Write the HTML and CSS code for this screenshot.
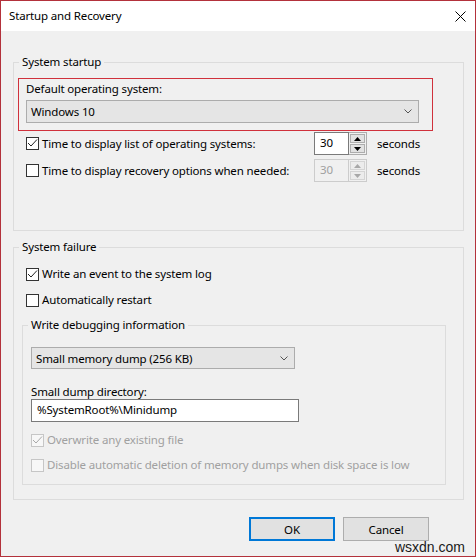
FILE: index.html
```html
<!DOCTYPE html>
<html lang="en">
<head>
<meta charset="utf-8">
<title>Startup and Recovery</title>
<link rel="stylesheet" href="styles.css">
</head>
<body>
<div class="window">
  <div class="titlebar">
    <span class="title">Startup and Recovery</span>
    <svg class="close" width="11" height="11" viewBox="0 0 11 11"><path d="M0.5 0.5 L10.5 10.5 M10.5 0.5 L0.5 10.5" stroke="#000" stroke-width="1" fill="none"/></svg>
  </div>
  <div class="content">
    <fieldset class="group g1">
      <legend>System startup</legend>
      <div class="highlight">
        <div class="label">Default operating system:</div>
        <div class="select sel1"><span>Windows 10</span><svg class="chev" width="8" height="5" viewBox="0 0 8 5"><polyline points="0.5,0.5 4,4 7.5,0.5" stroke="#555" fill="none"/></svg></div>
      </div>
      <div class="timed first">
        <div class="cb"><span class="box"><svg width="11" height="11" viewBox="0 0 11 11"><polyline points="1,5 4,8 10,1.5" stroke="#222" fill="none"/></svg></span><span>Time to display list of operating systems:</span></div>
        <div class="spin">
          <div class="spin-text">30</div>
          <div class="spin-btns">
            <span class="sb"><svg width="7" height="4" viewBox="0 0 7 4"><path d="M0 4 L3.5 0 L7 4 Z" fill="#000"/></svg></span>
            <span class="sb"><svg width="7" height="4" viewBox="0 0 7 4"><path d="M0 0 L3.5 4 L7 0 Z" fill="#000"/></svg></span>
          </div>
        </div>
        <span class="unit">seconds</span>
      </div>
      <div class="timed second">
        <div class="cb"><span class="box"></span><span>Time to display recovery options when needed:</span></div>
        <div class="spin disabled">
          <div class="spin-text">30</div>
          <div class="spin-btns">
            <span class="sb"><svg width="7" height="4" viewBox="0 0 7 4"><path d="M0 4 L3.5 0 L7 4 Z" fill="#a8a8a8"/></svg></span>
            <span class="sb"><svg width="7" height="4" viewBox="0 0 7 4"><path d="M0 0 L3.5 4 L7 0 Z" fill="#a8a8a8"/></svg></span>
          </div>
        </div>
        <span class="unit">seconds</span>
      </div>
    </fieldset>

    <fieldset class="group g2">
      <legend>System failure</legend>
      <div class="cb row r1"><span class="box"><svg width="11" height="11" viewBox="0 0 11 11"><polyline points="1,5 4,8 10,1.5" stroke="#222" fill="none"/></svg></span><span>Write an event to the system log</span></div>
      <div class="cb row r2"><span class="box"></span><span>Automatically restart</span></div>

      <fieldset class="group inner">
        <legend>Write debugging information</legend>
        <div class="select sel2"><span>Small memory dump (256 KB)</span><svg class="chev" width="8" height="5" viewBox="0 0 8 5"><polyline points="0.5,0.5 4,4 7.5,0.5" stroke="#555" fill="none"/></svg></div>
        <div class="label dir-label">Small dump directory:</div>
        <div class="textbox">%SystemRoot%\Minidump</div>
        <div class="cb row dis d1"><span class="box"><svg width="11" height="11" viewBox="0 0 11 11"><polyline points="1,5 4,8 10,1.5" stroke="#a8a8a8" fill="none"/></svg></span><span>Overwrite any existing file</span></div>
        <div class="cb row dis d2"><span class="box"></span><span>Disable automatic deletion of memory dumps when disk space is low</span></div>
      </fieldset>
    </fieldset>

    <div class="buttons">
      <div class="btn default">OK</div>
      <div class="btn">Cancel</div>
    </div>
  </div>
  <div class="watermark">wsxdn.com</div>
</div>
</body>
</html>
```

FILE: styles.css
```css
* { box-sizing: border-box; }
html, body { margin: 0; padding: 0; }
body {
  font-family: "Noto Sans", sans-serif;
  font-size: 11.5px;
  letter-spacing: -0.15px;
  color: #000;
  background: #f0f0f0;
}
.window {
  position: relative;
  width: 476px;
  height: 557px;
  border: 1px solid #b3313b;
  background: #f0f0f0;
  overflow: hidden;
}
.titlebar {
  height: 30px;
  background: #fff;
  display: flex;
  align-items: center;
  justify-content: space-between;
  padding: 0 9px 0 8px;
}
.title { line-height: 16px; }
.close { display: block; }

.content { padding: 23px 11px 0 12px; }

fieldset.group {
  margin: 0;
  padding: 0;
  border: 1px solid #dcdcdc;
  min-width: 0;
}
fieldset.group > legend {
  margin-left: 5px;
  padding: 0 3px;
  line-height: 16px;
}

fieldset.g1 { padding-bottom: 48px; }
.highlight {
  margin: 8px 0 0 4px;
  width: 415px;
  border: 1px solid #d0313c;
  padding: 2px 0 7px 7px;
}
.label { line-height: 16px; }

.select {
  display: flex;
  align-items: center;
  justify-content: space-between;
  background: #e5e5e5;
  border: 1px solid #acacac;
  padding: 0 6px 0 4px;
}
.sel1 { margin-top: 3px; width: 393px; height: 23px; }
.chev { display: block; }

.timed {
  display: grid;
  grid-template-columns: 288px 53px auto;
  align-items: center;
  height: 23px;
  margin-left: 12px;
}
.timed.first { margin-top: 1px; }
.timed.second { margin-top: 4px; }
.unit { padding-left: 10px; line-height: 16px; }

.cb {
  display: flex;
  align-items: center;
  line-height: 16px;
}
.box {
  flex: none;
  width: 13px;
  height: 13px;
  border: 1px solid #333;
  background: #fff;
  margin-right: 3px;
}
.box svg { display: block; }

.spin {
  display: flex;
  height: 23px;
}
.spin-text {
  width: 35px;
  height: 23px;
  border: 1px solid #7a7a7a;
  background: #fff;
  padding-left: 5px;
  line-height: 20px;
}
.spin-btns {
  width: 18px;
  display: flex;
  flex-direction: column;
  border: 1px solid #adadad;
  border-left: none;
  background: #f0f0f0;
  padding: 1px;
  gap: 1px;
}
.sb {
  flex: 1;
  display: flex;
  align-items: center;
  justify-content: center;
  background: #e1e1e1;
  border: 1px solid #adadad;
}
.sb svg { display: block; }
.spin.disabled .spin-text {
  border-color: #cccccc;
  background: #f0f0f0;
  color: #a0a0a0;
}
.spin.disabled .spin-btns { border-color: #cccccc; }
.spin.disabled .sb { border-color: #d4d4d4; background: #ececec; }

fieldset.g2 { margin-top: 8px; padding-bottom: 14px; }
.row { height: 16px; margin-left: 12px; }
.r1 { margin-top: 11px; }
.r2 { margin-top: 10px; }

fieldset.inner { margin: 9px 17px 0 8px; padding-bottom: 11px; }
.sel2 { margin: 14px 0 0 8px; width: 264px; height: 22px; }
.dir-label { margin: 16px 0 0 8px; line-height: 14px; }
.textbox {
  margin-left: 8px;
  width: 268px;
  height: 23px;
  border: 1px solid #7a7a7a;
  background: #fff;
  padding-left: 5px;
  line-height: 20px;
}
.row.dis { margin-left: 8px; color: #a0a0a0; }
.row.dis .box { border-color: #c6c6c6; background: #f7f7f7; }
.d1 { margin-top: 10px; }
.d2 { margin-top: 9px; }

.buttons {
  display: flex;
  justify-content: flex-end;
  gap: 8px;
  margin: 17px 35px 0 0;
}
.btn {
  width: 86px;
  height: 24px;
  background: #e1e1e1;
  border: 1px solid #adadad;
  display: flex;
  align-items: center;
  justify-content: center;
}
.btn.default { border: 2px solid #0078d7; }

.watermark {
  position: absolute;
  right: 10px;
  bottom: 1px;
  font-family: "Liberation Sans", sans-serif;
  font-size: 14px;
  letter-spacing: 0;
  color: #1a1a1a;
}
```
